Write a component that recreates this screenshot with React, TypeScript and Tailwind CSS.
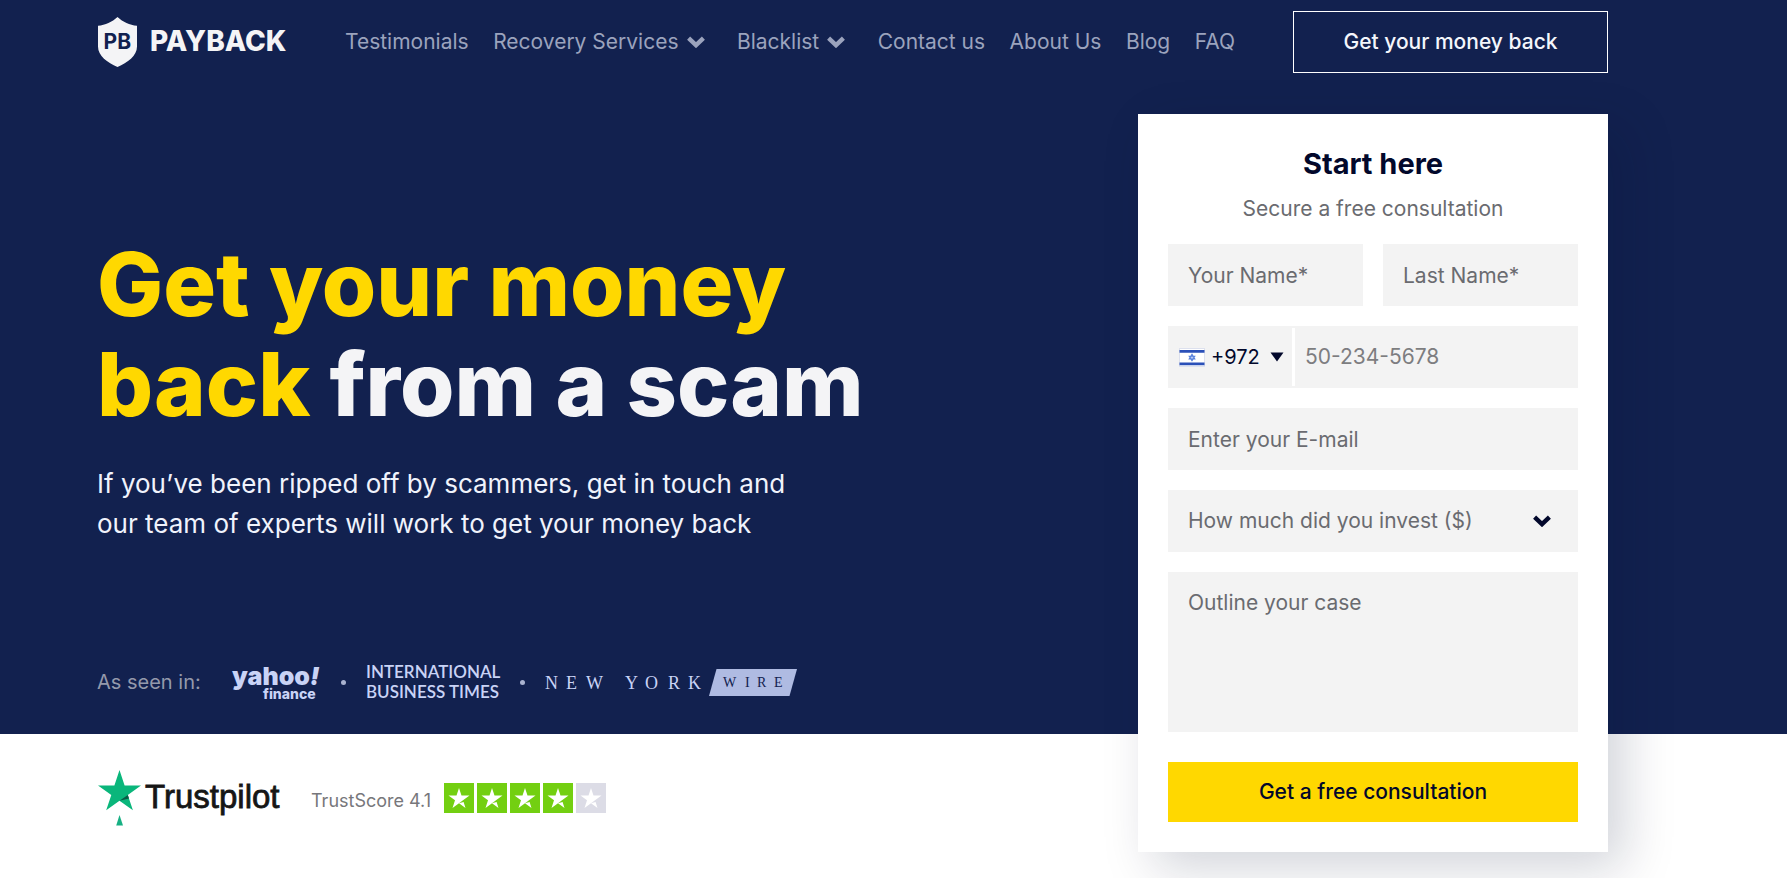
import type { ReactNode } from "react";

const fieldClass =
  "w-full rounded-none border-0 bg-[#f3f3f3] px-5 text-[21px] leading-[30px] text-[#02082b] placeholder:text-[#6a6b70] outline-none";

function Chevron({ className }: { className: string }) {
  return (
    <svg viewBox="0 0 18 12" className={className} fill="none" aria-hidden="true">
      <path d="M1.6 2.2 L9 9.2 L16.4 2.2" stroke="currentColor" strokeWidth="4.4" />
    </svg>
  );
}

function PaybackLogo() {
  return (
    <svg
      viewBox="0 0 190 50"
      className="h-[50px] w-[190px]"
      role="img"
      aria-label="Payback"
      fontFamily="Inter, sans-serif"
    >
      <path
        d="M20.5 0 C26 5.2 32.6 8 40 8.8 V29.5 C40 39 30.5 45.5 20.5 50 C10.5 45.5 1 39 1 29.5 V8.8 C8.4 8 15 5.2 20.5 0 Z"
        fill="#f4f4f6"
      />
      <text x="20.3" y="31.6" fontSize="21" fontWeight="700" fill="#12214f" textAnchor="middle">
        PB
      </text>
      <text x="53" y="34" fontSize="28" fontWeight="800" fill="#f4f4f6">
        PAYBACK
      </text>
    </svg>
  );
}

function NavLink({ children }: { children: ReactNode }) {
  return (
    <a href="#" className="whitespace-nowrap hover:text-white">
      {children}
    </a>
  );
}

function NavMenu({ children }: { children: ReactNode }) {
  return (
    <button type="button" aria-haspopup="menu" className="flex items-center gap-2 whitespace-nowrap pr-2 hover:text-white">
      {children}
      <Chevron className="h-3 w-[18px]" />
    </button>
  );
}

function Header() {
  return (
    <header className="flex items-center justify-between gap-[58px] pt-[11px] text-[21px] leading-[30px] text-[#9ba3bd]">
      <a href="#" className="shrink-0">
        <PaybackLogo />
      </a>
      <nav className="flex flex-1 items-center justify-between gap-3">
        <NavLink>Testimonials</NavLink>
        <NavMenu>Recovery Services</NavMenu>
        <NavMenu>Blacklist</NavMenu>
        <NavLink>Contact us</NavLink>
        <NavLink>About Us</NavLink>
        <NavLink>Blog</NavLink>
        <NavLink>FAQ</NavLink>
      </nav>
      <button
        type="button"
        className="h-[62px] w-[315px] shrink-0 border border-white font-medium text-[#f4f6fc]"
      >
        Get your money back
      </button>
    </header>
  );
}

function YahooFinance() {
  return (
    <svg
      viewBox="0 0 90 40"
      className="h-10 w-[90px] overflow-visible"
      role="img"
      aria-label="yahoo! finance"
      fill="#c9d3f6"
      fontFamily="Inter, sans-serif"
    >
      <text x="0" y="22.5" fontSize="25" fontWeight="900">
        yahoo
        <tspan fontStyle="italic">!</tspan>
      </text>
      <text x="31" y="36.5" fontSize="14" fontWeight="800">
        finance
      </text>
    </svg>
  );
}

function NewYorkWire() {
  return (
    <svg
      viewBox="0 0 254 40"
      className="h-10 w-[254px]"
      role="img"
      aria-label="New York Wire"
      fontFamily="'Liberation Serif', serif"
    >
      <text x="0 21 41 80 100 123 143" y="26.5" fontSize="18" fill="#c9d3f6">
        NEWYORK
      </text>
      <path d="M171.5 7 H252 L244.5 34 H164 Z" fill="#afbbe2" />
      <text x="178 200 212 229" y="25" fontSize="14" fill="#12214f">
        WIRE
      </text>
    </svg>
  );
}

function Dot() {
  return <span className="size-[5px] shrink-0 rounded-full bg-[#a9b2cf]" />;
}

function Press() {
  return (
    <div className="mt-[118px] flex h-10 items-center">
      <span className="w-[135px] text-[20px] text-[#9499ab]">As seen in:</span>
      <YahooFinance />
      <div className="flex items-center gap-5 pl-[19px]">
        <Dot />
        <p className="whitespace-nowrap font-[Lato,sans-serif] text-[17px] font-semibold leading-5 text-[#c9d3f6]">
          INTERNATIONAL
          <br />
          BUSINESS TIMES
        </p>
        <Dot />
        <NewYorkWire />
      </div>
    </div>
  );
}

function Flag() {
  return (
    <svg viewBox="0 0 26 19" className="h-[19px] w-[26px]" aria-hidden="true">
      <rect x="0.5" y="0.5" width="25" height="18" fill="#fff" stroke="#dde1ee" />
      <path d="M0.5 3.4 H25.5 M0.5 15.8 H25.5" stroke="#2b50b8" strokeWidth="2.8" />
      <path d="M13 6.4 L15.8 11 H10.2 Z M13 12.8 L10.2 8.2 H15.8 Z" fill="#b9ccf5" stroke="#5b83dc" strokeWidth="1.1" />
    </svg>
  );
}

function ConsultationForm() {
  return (
    <form className="relative z-10 -mb-[150px] w-[470px] shrink-0 bg-white p-[30px] shadow-[16px_16px_48px_rgba(0,14,52,0.18)]">
      <h2 className="text-center text-[29px] font-bold leading-10 text-[#02082b]">Start here</h2>
      <p className="mt-[10px] text-center text-[21px] leading-[30px] text-[#6a6b70]">
        Secure a free consultation
      </p>
      <div className="mt-5 grid grid-cols-2 gap-5">
        <input aria-label="Your Name" placeholder="Your Name*" className={`${fieldClass} h-[62px]`} />
        <input aria-label="Last Name" placeholder="Last Name*" className={`${fieldClass} h-[62px]`} />
        <div className="col-span-2 flex h-[62px] bg-[#f3f3f3]">
          <div className="relative flex w-[124px] shrink-0 items-center">
            <select
              aria-label="Country code"
              className="h-full w-full appearance-none bg-transparent pl-[43px] text-[20px] leading-[30px] text-[#02082b] outline-none"
            >
              <option>+972</option>
            </select>
            <span className="pointer-events-none absolute inset-0 flex items-center justify-between pl-[11px] pr-2">
              <Flag />
              <svg viewBox="0 0 14 10" className="h-[10px] w-[14px]" aria-hidden="true">
                <path d="M0.5 0.5 H13.5 L7 9.5 Z" fill="#02082b" />
              </svg>
            </span>
          </div>
          <span className="my-[2px] w-[3px] bg-white" />
          <input
            type="tel"
            aria-label="Phone number"
            placeholder="50-234-5678"
            className="min-w-0 flex-1 bg-transparent pl-[10px] text-[21px] leading-[30px] text-[#02082b] placeholder:text-[#7d7d80] outline-none"
          />
        </div>
        <input
          type="email"
          aria-label="E-mail"
          placeholder="Enter your E-mail"
          className={`${fieldClass} col-span-2 h-[62px]`}
        />
        <div className="relative col-span-2">
          <select
            aria-label="Invested amount"
            className="h-[62px] w-full appearance-none bg-[#f3f3f3] px-5 text-[21px] leading-[30px] text-[#6a6b70] outline-none"
          >
            <option>How much did you invest ($)</option>
          </select>
          <span className="pointer-events-none absolute inset-y-0 right-[27px] flex items-center text-[#02082b]">
            <Chevron className="h-3 w-[18px]" />
          </span>
        </div>
        <textarea
          aria-label="Case outline"
          placeholder="Outline your case"
          className={`${fieldClass} col-span-2 block h-40 resize-none py-4`}
        />
      </div>
      <button
        type="submit"
        className="mt-[30px] h-[60px] w-full bg-[#ffd800] text-[21px] font-medium leading-[30px] text-[#02082b]"
      >
        Get a free consultation
      </button>
    </form>
  );
}

function Hero() {
  return (
    <main className="mt-[41px] flex items-start justify-between gap-10">
      <div className="pt-[120px]">
        <h1 className="text-[88px] font-extrabold leading-[100px] text-[#f4f4f6]">
          <span className="text-[#ffd800]">
            Get your money
            <br />
            back
          </span>{" "}
          from a scam
        </h1>
        <p className="mt-[30px] text-[26px] leading-10 text-[#f0f3fc]">
          If you’ve been ripped off by scammers, get in touch and
          <br />
          our team of experts will work to get your money back
        </p>
        <Press />
      </div>
      <ConsultationForm />
    </main>
  );
}

function Trustpilot() {
  return (
    <svg viewBox="0 0 190 64" className="h-16 w-[190px]" role="img" aria-label="Trustpilot">
      <path
        d="M22.5 4 L27.6 19.4 H44 L30.8 28.9 L35.9 44.2 L22.5 34.8 L9.2 44.2 L14.3 28.9 L1 19.4 H17.4 Z"
        fill="#0ab67b"
      />
      <path d="M32 32.6 L30.8 28.9 L22.5 34.8 Z" fill="#0a5a45" />
      <path d="M22.5 49 L26 59.5 H19.2 Z" fill="#17b083" />
      <text
        x="48"
        y="42"
        fontSize="33"
        fontFamily="'Liberation Sans', sans-serif"
        fill="#161616"
        stroke="#161616"
        strokeWidth="0.8"
      >
        Trustpilot
      </text>
    </svg>
  );
}

function StarTile({ filled }: { filled: boolean }) {
  return (
    <svg viewBox="0 0 30 30" className="size-[30px]" aria-hidden="true">
      <rect width="30" height="30" fill={filled ? "#73cf11" : "#dcdce6"} />
      <path
        d="M15 20.2l4.6-1.2 1.9 5.9L15 20.2zM25.5 12.6h-8L15 5l-2.5 7.6h-8l6.5 4.7-2.5 7.6 6.5-4.7 4-2.9 6.5-4.7z"
        fill="#fff"
      />
    </svg>
  );
}

function Trust() {
  return (
    <section className="flex items-center py-8 pl-[97px]">
      <a href="#">
        <Trustpilot />
      </a>
      <span className="ml-6 mt-1 text-[18px] text-[#77777b]">TrustScore 4.1</span>
      <div className="ml-[13px] flex gap-[3px]" role="img" aria-label="4.1 out of 5 stars">
        {[1, 2, 3, 4, 5].map((n) => (
          <StarTile key={n} filled={n <= 4} />
        ))}
      </div>
    </section>
  );
}

export default function App() {
  return (
    <div className="min-h-screen bg-white font-[Inter,sans-serif]">
      <div className="bg-[#12214f] pb-8 pl-[97px] pr-[179px]">
        <Header />
        <Hero />
      </div>
      <Trust />
    </div>
  );
}
